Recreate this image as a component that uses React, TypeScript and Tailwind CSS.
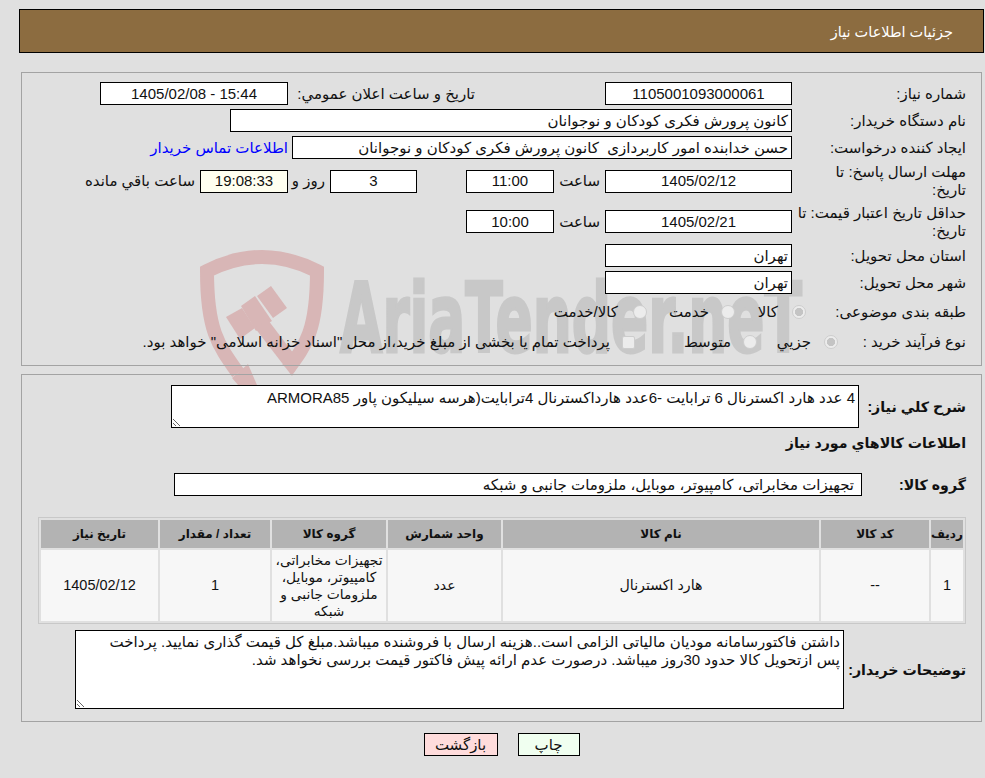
import type { ReactNode } from 'react'

function Box({ w, tint, align, children }: { w: string; tint?: boolean; align?: string; children?: ReactNode }) {
  return (
    <div className={`${w} ${tint ? 'bg-[#fffff0]' : 'bg-white'} ${align ?? 'justify-center'} h-[23px] shrink-0 border border-black flex items-center px-[3px] whitespace-nowrap`}>
      {children}
    </div>
  )
}

function Watermark() {
  return (
    <svg dir="ltr" className="absolute top-0 left-0 w-[985px] h-[778px] pointer-events-none" viewBox="0 0 985 778">
      {/* shield */}
      <path d="M238 373 C218 345 207 330 207 271 Q262 243 317 271 C317 330 306 345 288 369" fill="none" stroke="#d8b6b6" strokeWidth="14" />
      {/* gavel */}
      <g fill="#d8b6b6">
        <path d="M226 317 L242 308 L255 328 L240 339 Z" />
        <path d="M241 306 L255 296 L272 321 L256 331 Z" />
        <path d="M257 296 L271 286 L287 308 L273 318 Z" />
        <path d="M255 328 L268 320 L300 362 L292 376 Z" />
        <path d="M232 378 L248 364 L257 385 L238 385 Z" />
      </g>
      <text x="340" y="352" direction="ltr" fontFamily="DejaVu Sans" fontWeight="700" fontSize="96" fill="#c8c8c8" stroke="#c8c8c8" strokeWidth="3" textLength="462" lengthAdjust="spacingAndGlyphs">AriaTender.neT</text>
    </svg>
  )
}

function Option({ w, gap, type, checked, children }: { w: string; gap: string; type: string; checked?: boolean; children: ReactNode }) {
  const mark =
    type === 'radio'
      ? 'w-[14px] h-[14px] rounded-full checked:bg-[radial-gradient(circle,#c4c4c4_45%,#ececec_52%)]'
      : 'w-[13px] h-[13px] rounded-[2px]'
  return (
    <label className={`${w} ${gap} flex items-center shrink-0 whitespace-nowrap`}>
      <input type={type} disabled defaultChecked={checked} className={`${mark} m-0 shrink-0 appearance-none border border-[#cdcdcd] bg-[#ececec]`} />
      <span>{children}</span>
    </label>
  )
}

const columns = ['w-[32px]', 'w-[108px]', 'w-[316px]', 'w-[113px]', 'w-[114px]', 'w-[110px]', 'w-[117px]']
const headers = ['رديف', 'کد کالا', 'نام کالا', 'واحد شمارش', 'گروه کالا', 'تعداد / مقدار', 'تاریخ نیاز']

export default function App() {
  return (
    <div dir="rtl" className="relative h-[778px] overflow-hidden bg-[#e0e0e0] pt-[9px] pr-px pl-[19px] text-[15px] leading-[18px] text-[#111] font-['Liberation_Sans','DejaVu_Sans',sans-serif]">
      <Watermark />

      <div className="relative h-[44px] bg-[#8c6c40] border border-black flex items-center pr-[30px] pt-px text-[14.5px] text-white">
        جزئیات اطلاعات نیاز
      </div>

      {/* main details */}
      <div className="relative mt-[19px] mx-[2px] h-[294px] border border-[#a3a3a3] pt-[7px] pr-[15px]">
        <div className="flex items-center h-[27px]">
          <div className="w-[174px] shrink-0">شماره نیاز:</div>
          <Box w="w-[187px]">1105001093000061</Box>
          <div className="w-[130px] shrink-0"></div>
          <div className="w-[187px] shrink-0 whitespace-nowrap">تاریخ و ساعت اعلان عمومي:</div>
          <Box w="w-[188px]">15:44 - 1405/02/08</Box>
        </div>
        <div className="flex items-center h-[27px]">
          <div className="w-[174px] shrink-0">نام دستگاه خریدار:</div>
          <Box w="w-[562px]" align="justify-start">کانون پرورش فکری کودکان و نوجوانان</Box>
        </div>
        <div className="flex items-center h-[27px]">
          <div className="w-[174px] shrink-0">ایجاد کننده درخواست:</div>
          <Box w="w-[500px]" align="justify-start">حسن خدابنده امور کاربردازی&nbsp; کانون پرورش فکری کودکان و نوجوانان</Box>
          <a className="mr-[4px] text-[#0000ff] whitespace-nowrap">اطلاعات تماس خریدار</a>
        </div>
        <div className="flex items-center h-[40px]">
          <div className="w-[174px] shrink-0">مهلت ارسال پاسخ: تا<br />تاریخ:</div>
          <Box w="w-[187px]">1405/02/12</Box>
          <div className="w-[51px] shrink-0 pr-[5px]">ساعت</div>
          <Box w="w-[88px]">11:00</Box>
          <div className="w-[49px] shrink-0"></div>
          <Box w="w-[87px]">3</Box>
          <div className="w-[42px] shrink-0 pr-[5px]">روز و</div>
          <Box w="w-[88px]" tint>19:08:33</Box>
          <div className="pr-[5px] whitespace-nowrap">ساعت باقي مانده</div>
        </div>
        <div className="flex items-center h-[41px]">
          <div className="w-[174px] shrink-0 whitespace-nowrap">حداقل تاریخ اعتبار قیمت: تا<br />تاریخ:</div>
          <Box w="w-[187px]">1405/02/21</Box>
          <div className="w-[51px] shrink-0 pr-[5px]">ساعت</div>
          <Box w="w-[88px]">10:00</Box>
        </div>
        <div className="flex items-center h-[27px]">
          <div className="w-[174px] shrink-0">استان محل تحویل:</div>
          <Box w="w-[187px]" align="justify-start">تهران</Box>
        </div>
        <div className="flex items-center h-[27px]">
          <div className="w-[174px] shrink-0">شهر محل تحویل:</div>
          <Box w="w-[187px]" align="justify-start">تهران</Box>
        </div>
        <div className="flex items-center h-[32px]">
          <div className="w-[160px] shrink-0 whitespace-nowrap">طبقه بندی موضوعی:</div>
          <Option w="w-[71px]" gap="gap-[14px]" type="radio" checked>کالا</Option>
          <Option w="w-[88px]" gap="gap-[12px]" type="radio">خدمت</Option>
          <Option w="w-[92px]" gap="gap-[15px]" type="radio">کالا/خدمت</Option>
        </div>
        <div className="flex items-center h-[28px]">
          <div className="w-[128px] shrink-0 whitespace-nowrap">نوع فرآیند خرید :</div>
          <Option w="w-[81px]" gap="gap-[13px]" type="radio" checked>جزیي</Option>
          <Option w="w-[122px]" gap="gap-[12px]" type="radio">متوسط</Option>
          <Option w="w-[500px]" gap="gap-[12px]" type="checkbox">پرداخت تمام یا بخشی از مبلغ خرید،از محل "اسناد خزانه اسلامی" خواهد بود.</Option>
        </div>
      </div>

      {/* requested goods */}
      <div className="relative mt-[8px] mx-[2px] h-[348px] border border-[#a3a3a3] pt-[10px] pr-[15px] font-bold">
        <div className="flex items-center">
          <div className="w-[107px] shrink-0 text-[14.2px] whitespace-nowrap">شرح کلي نیاز:</div>
          <textarea
            readOnly
            dir="rtl"
            className="block w-[688px] h-[43px] bg-white border border-black px-[3px] py-[3px] outline-none font-normal text-[15px] leading-[18px]"
            defaultValue="4 عدد هارد اکسترنال 6 ترابایت -6عدد هارداکسترنال 4ترابایت(هرسه سیلیکون پاور ARMORA85"
          />
        </div>
        <div className="flex items-center h-[30px] text-[14.2px]">اطلاعات کالاهاي مورد نیاز</div>
        <div className="flex items-center mt-[15px]">
          <div className="w-[104px] shrink-0 text-[14.2px] whitespace-nowrap">گروه کالا:</div>
          <div className="w-[688px] h-[23px] bg-white border border-black flex items-center pr-[7px] font-normal whitespace-nowrap">
            تجهیزات مخابراتی، کامپیوتر، موبایل، ملزومات جانبی و شبکه
          </div>
        </div>
        <table className="mt-[21px] w-[928px] table-fixed border-separate border-spacing-[2px] border border-[#c8c8c8] text-[13.8px] leading-[17px] font-normal">
          <colgroup>
            {columns.map((c) => (
              <col key={c} className={c} />
            ))}
          </colgroup>
          <thead>
            <tr>
              {headers.map((h) => (
                <th key={h} className="h-[28px] p-0 bg-[#b3b3b3] font-bold text-[12px] text-center whitespace-nowrap">{h}</th>
              ))}
            </tr>
          </thead>
          <tbody>
            <tr className="bg-[#f7f7f7] text-center">
              <td className="h-[71px] p-0 text-[14.5px]">1</td>
              <td className="p-0 text-[14.5px]">--</td>
              <td className="p-0 text-[14.2px]">هارد اکسترنال</td>
              <td className="p-0 text-[14.2px]">عدد</td>
              <td className="p-0">تجهیزات مخابراتی، کامپیوتر، موبایل، ملزومات جانبی و شبکه</td>
              <td className="p-0 text-[14.5px]">1</td>
              <td className="p-0 text-[14.5px]">1405/02/12</td>
            </tr>
          </tbody>
        </table>
        <div className="flex items-center mt-[6px]">
          <div className="w-[122px] shrink-0 text-[14.2px] whitespace-nowrap">توضیحات خریدار:</div>
          <textarea
            readOnly
            dir="rtl"
            className="block w-[769px] h-[79px] bg-white border border-black pr-[3px] pl-[20px] py-[2px] outline-none font-normal text-[15px] leading-[18px]"
            defaultValue="داشتن فاکتورسامانه مودیان مالیاتی الزامی است..هزینه ارسال با فروشنده میباشد.مبلغ کل قیمت گذاری نمایید. پرداخت پس ازتحویل کالا حدود 30روز میباشد. درصورت عدم ارائه پیش فاکتور قیمت بررسی نخواهد شد."
          />
        </div>
      </div>

      <div className="relative mt-[11px] flex justify-center gap-[20px]">
        <button className="w-[62px] h-[23px] bg-[#f0fff0] border border-black text-[15px]">چاپ</button>
        <button className="w-[74px] h-[23px] bg-[#ffdcdc] border border-black text-[15px]">بازگشت</button>
      </div>
    </div>
  )
}
